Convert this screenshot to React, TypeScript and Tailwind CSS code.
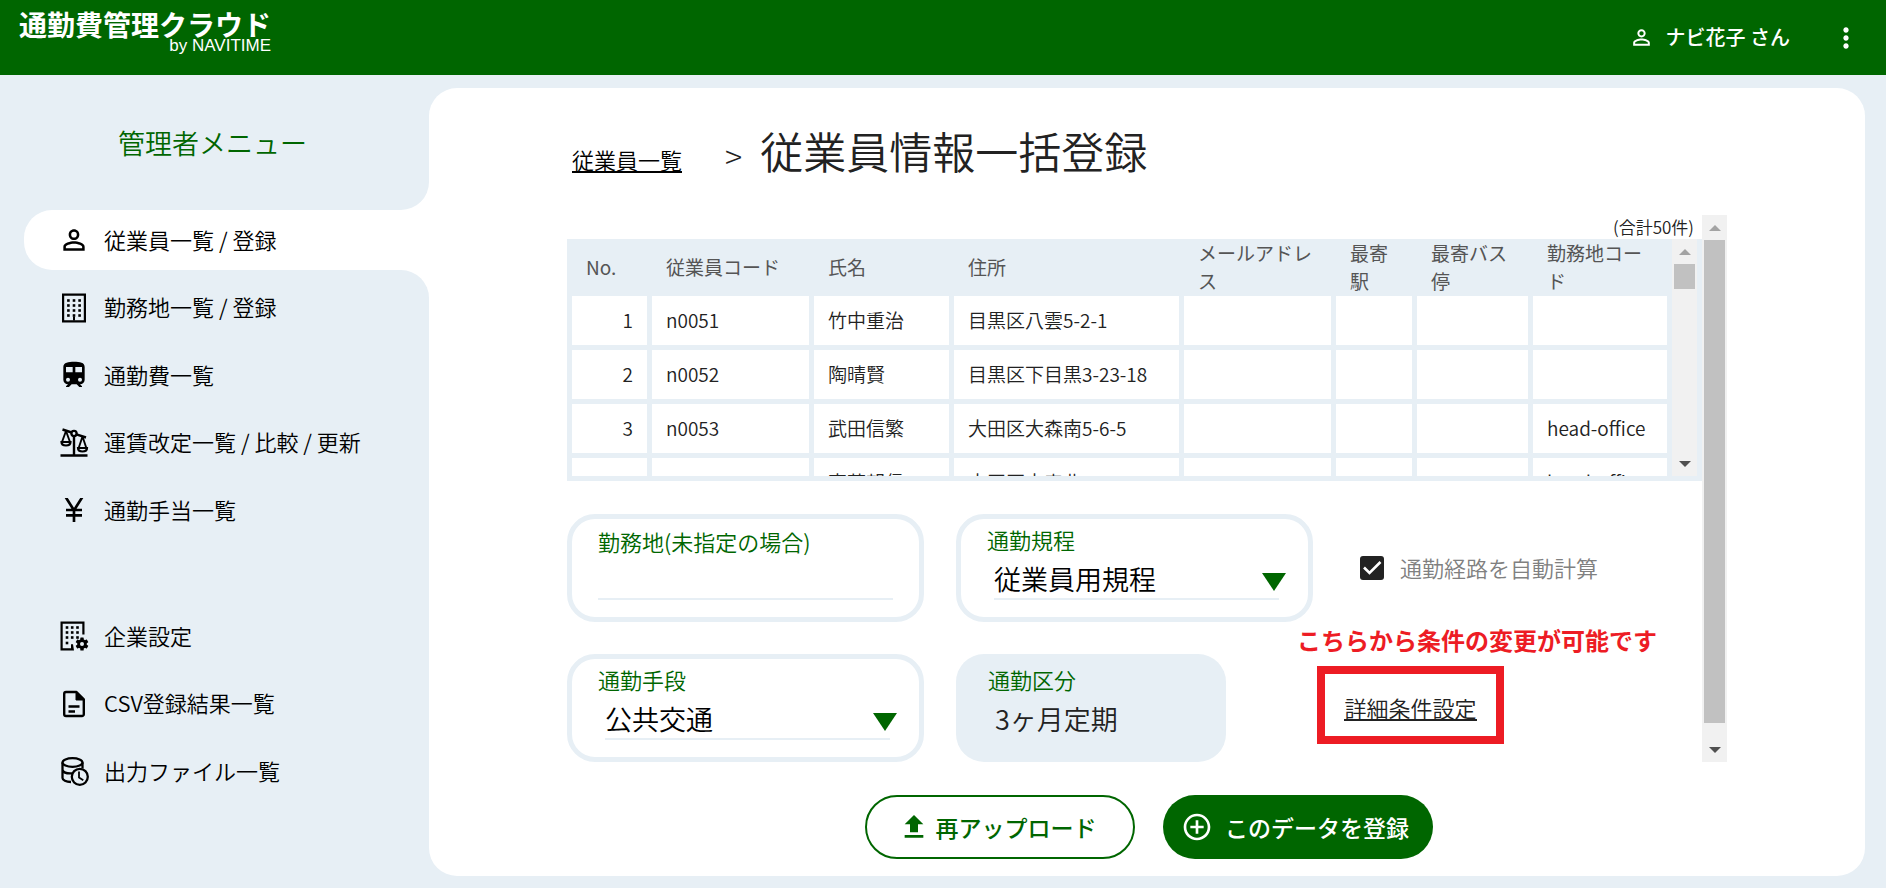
import type { ReactNode } from "react";
import {
  MdAddCircleOutline,
  MdCurrencyYen,
  MdFileUpload,
  MdMoreVert,
  MdPersonOutline,
} from "react-icons/md";

function BuildingIcon() {
  return (
    <svg viewBox="0 0 32 32" className="size-8" fill="currentColor" aria-hidden="true">
      <path fillRule="evenodd" d="M4 1.500h24v29H4zM6.200 3.700v24.600h19.600V3.700z" />
      {[8.500, 13.500, 18.500, 23.500].map((y) =>
        [10.400, 16, 21.600].map((x) => (
          <rect key={`${x}-${y}`} x={x - 1.300} y={y - 1.300} width="2.600" height="2.600" />
        )),
      )}
      <path d="M15 24.500h2v4h-2z" />
    </svg>
  );
}

function TrainIcon() {
  return (
    <svg viewBox="0 0 24 24" className="size-8" fill="currentColor" aria-hidden="true">
      <path d="M12 2C8 2 4 2.500 4 6v9.500A3.500 3.500 0 0 0 7.500 19L6 20.500V21h2.230l2-2H14l2 2h2v-.500L16.500 19a3.500 3.500 0 0 0 3.500-3.500V6c0-3.500-3.580-4-8-4zM7.500 17A1.500 1.500 0 0 1 6 15.500 1.500 1.500 0 0 1 7.500 14 1.500 1.500 0 0 1 9 15.500 1.500 1.500 0 0 1 7.500 17zM11 10H6V6h5v4zm2 0V6h5v4h-5zm3.500 7a1.500 1.500 0 0 1-1.500-1.500 1.500 1.500 0 0 1 1.500-1.500 1.500 1.500 0 0 1 1.500 1.500 1.500 1.500 0 0 1-1.500 1.500z" />
    </svg>
  );
}

function ScaleIcon() {
  return (
    <svg viewBox="0 0 32 32" className="size-8" fill="none" stroke="currentColor" strokeWidth="2.400" aria-hidden="true">
      <path d="M2.500 28.500h27M16 9v19" />
      <circle cx="16" cy="6.500" r="2.600" />
      <path d="M4.500 2.500l9.200 3M18.400 7.300L28 10.500" />
      <path d="M8 4L4 15M8 4l4 11M24.500 9.500l-4 12M24.500 9.500l4 12" strokeWidth="1.900" />
      <path d="M3.500 15h9c0 2.500-2 3.500-4.500 3.500S3.500 17.500 3.500 15zM20 21h9c0 2.500-2 3.500-4.500 3.500S20 23.500 20 21z" strokeWidth="2.200" />
    </svg>
  );
}

function BuildingGearIcon() {
  return (
    <svg viewBox="0 0 32 32" className="size-8" fill="currentColor" aria-hidden="true">
      <path d="M2.500 1.500h24v13h-2.200V3.700H4.700v24.600h8.300v-4h2l1 6.200H2.500z" />
      {[7.500, 12.500, 17.500, 23].map((y) =>
        [9, 14.200, 19.500].map((x) =>
          y === 23 && x > 10 ? null : (
            <rect key={`${x}-${y}`} x={x - 1.300} y={y - 1.300} width="2.600" height="2.600" />
          ),
        ),
      )}
      <g transform="translate(24 24)">
        {[0, 60, 120].map((a) => (
          <rect key={a} x="-1.700" y="-6.400" width="3.400" height="12.800" rx=".5" transform={`rotate(${a})`} />
        ))}
        <circle r="4.800" />
        <circle r="2" fill="#e7eff5" />
      </g>
    </svg>
  );
}

function FileIcon() {
  return (
    <svg viewBox="0 0 32 32" className="size-8" fill="none" stroke="currentColor" strokeWidth="2.400" strokeLinejoin="round" aria-hidden="true">
      <path d="M18.500 4H8a1.800 1.800 0 0 0-1.800 1.800v20.400A1.800 1.800 0 0 0 8 28h16a1.800 1.800 0 0 0 1.800-1.800V11.300z" />
      <path d="M18 4v8h8z" fill="currentColor" strokeWidth="1" />
      <path d="M10.500 18.500h11M10.500 23.500h6.500" />
    </svg>
  );
}

function DatabaseClockIcon() {
  return (
    <svg viewBox="0 0 32 32" className="size-8" fill="none" stroke="currentColor" strokeWidth="2.300" aria-hidden="true">
      <ellipse cx="14.500" cy="7.500" rx="10" ry="4.300" />
      <path d="M4.500 7.500v15.500c0 2 3.500 3.800 8.500 4M24.500 7.500v6M4.500 15c1 2.500 5 3.700 9.500 3.400" />
      <circle cx="21.800" cy="21.800" r="8" fill="#e7eff5" />
      <path d="M21 16.500v6l4.300 2.800" strokeWidth="1.800" />
    </svg>
  );
}

type MenuEntry = { label: string; icon: ReactNode; active?: boolean };

const mainMenu: MenuEntry[] = [
  { label: "従業員一覧 / 登録", icon: <MdPersonOutline className="size-8" />, active: true },
  { label: "勤務地一覧 / 登録", icon: <BuildingIcon /> },
  { label: "通勤費一覧", icon: <TrainIcon /> },
  { label: "運賃改定一覧 / 比較 / 更新", icon: <ScaleIcon /> },
  { label: "通勤手当一覧", icon: <MdCurrencyYen className="size-8" /> },
];

const subMenu: MenuEntry[] = [
  { label: "企業設定", icon: <BuildingGearIcon /> },
  { label: "CSV登録結果一覧", icon: <FileIcon /> },
  { label: "出力ファイル一覧", icon: <DatabaseClockIcon /> },
];

function MenuItem({ label, icon, active }: MenuEntry) {
  return (
    <li className="relative">
      <a
        href="#"
        aria-current={active ? "page" : undefined}
        className={
          active
            ? "flex h-15 items-center gap-3.5 rounded-l-[28px] bg-white pl-[34px]"
            : "flex h-15 items-center gap-3.5 pl-[34px]"
        }
      >
        {icon}
        <span className="pb-0.5">{label}</span>
      </a>
      {active && (
        <>
          <span className="absolute right-0 bottom-full size-7 bg-white">
            <span className="block size-7 rounded-br-[28px] bg-[#e7eff5]" />
          </span>
          <span className="absolute top-full right-0 size-7 bg-white">
            <span className="block size-7 rounded-tr-[28px] bg-[#e7eff5]" />
          </span>
        </>
      )}
    </li>
  );
}

type Row = { no: number; code: string; name: string; address: string; office: string };

const rows: Row[] = [
  { no: 1, code: "n0051", name: "竹中重治", address: "目黒区八雲5-2-1", office: "" },
  { no: 2, code: "n0052", name: "陶晴賢", address: "目黒区下目黒3-23-18", office: "" },
  { no: 3, code: "n0053", name: "武田信繁", address: "大田区大森南5-6-5", office: "head-office" },
  { no: 4, code: "n0054", name: "斎藤朝信", address: "大田区大森北", office: "head-office" },
];

const headers = ["No.", "従業員コード", "氏名", "住所", "メールアドレス", "最寄駅", "最寄バス停", "勤務地コード"];

function Arrow({ down }: { down?: boolean }) {
  return (
    <span className="flex h-[25px] items-center justify-center">
      <svg viewBox="0 0 12 6" className="h-1.5 w-3" aria-hidden="true">
        {down ? <path d="M0 0h12L6 6z" fill="#505050" /> : <path d="M0 6h12L6 0z" fill="#a3a3a3" />}
      </svg>
    </span>
  );
}

function ScrollTrack({ thumb }: { thumb: string }) {
  return (
    <div className="flex w-[25px] shrink-0 flex-col bg-[#f1f1f1]" aria-hidden="true">
      <Arrow />
      <div className="min-h-0 flex-1 px-0.5">
        <div className={thumb} />
      </div>
      <Arrow down />
    </div>
  );
}

function EmployeeTable() {
  return (
    <div className="flex h-[242px] bg-[#e7eff5] pr-[5px] pb-[5px]">
      <div className="min-w-0 flex-1 overflow-hidden">
        <table className="w-full table-fixed border-separate border-spacing-x-[5px] border-spacing-y-0 text-[19px] leading-7">
          <colgroup>
            <col className="w-[75px]" />
            <col className="w-[157px]" />
            <col className="w-[135px]" />
            <col className="w-[225px]" />
            <col className="w-[147px]" />
            <col className="w-[76px]" />
            <col className="w-[111px]" />
            <col />
          </colgroup>
          <thead>
            <tr className="h-[57px]">
              {headers.map((h) => (
                <th key={h} className="px-3.5 pt-0 pb-px text-left font-normal text-[#555]">
                  {h}
                </th>
              ))}
            </tr>
          </thead>
          <tbody className="text-[#222]">
            {rows.map((r) => (
              <tr key={r.no} className="h-[54px] [&>td]:border-b-[5px] [&>td]:border-[#e7eff5] [&>td]:bg-white [&>td]:px-3.5 [&>td]:pt-0 [&>td]:pb-0.5">
                <td className="text-right">{r.no}</td>
                <td>{r.code}</td>
                <td>{r.name}</td>
                <td>{r.address}</td>
                <td />
                <td />
                <td />
                <td>{r.office}</td>
              </tr>
            ))}
          </tbody>
        </table>
      </div>
      <ScrollTrack thumb="h-[25px] bg-[#c1c1c1]" />
    </div>
  );
}

function SelectCard({ id, label, value }: { id: string; label: string; value: string }) {
  return (
    <div className="h-[108px] w-[357px] rounded-[28px] border-[5px] border-[#e7eff5] px-[26px] pt-1">
      <label htmlFor={id} className="block text-[22px] leading-8 text-[#006600]">
        {label}
      </label>
      <div className="relative mt-0.5 ml-[7px]">
        <select
          id={id}
          defaultValue={value}
          className="block h-[43px] w-[285px] appearance-none border-b-2 border-[#e7eff5] bg-transparent pt-0.5 text-[27px] leading-9 text-black outline-none"
        >
          <option>{value}</option>
        </select>
        <svg viewBox="0 0 24 18" className="pointer-events-none absolute top-4 -right-1 h-[18px] w-6 text-[#006600]" aria-hidden="true">
          <path d="M0 0h24L12 18z" fill="currentColor" />
        </svg>
      </div>
    </div>
  );
}

export default function App() {
  return (
    <div className="flex min-h-screen flex-col bg-[#e7eff5] font-['Noto_Sans_CJK_JP',sans-serif] text-[#222]">
      <header className="flex h-[75px] items-center justify-between bg-[#006600] pr-6 pl-[19px] text-white">
        <div className="flex h-full flex-col items-end pt-2.5">
          <span className="text-[28px] leading-7 font-bold">通勤費管理クラウド</span>
          <span className="font-['Liberation_Sans',sans-serif] text-[17px] leading-4">by NAVITIME</span>
        </div>
        <div className="flex items-center">
          <MdPersonOutline className="size-[25px]" />
          <span className="ml-3 pb-px text-[20px] font-medium">ナビ花子 さん</span>
          <button type="button" aria-label="メニュー" className="ml-10">
            <MdMoreVert className="size-8" />
          </button>
        </div>
      </header>

      <div className="flex flex-1 pr-[21px] pb-3">
        <aside className="w-[429px] shrink-0 pt-[47px] pl-6 text-[22px] font-[350] text-black">
          <h2 className="pr-7 text-center text-[27px] leading-[42px] text-[#006600]">管理者メニュー</h2>
          <nav className="mt-[46px]">
            <ul className="flex h-[330px] flex-col justify-between">
              {mainMenu.map((m) => (
                <MenuItem key={m.label} {...m} />
              ))}
            </ul>
            <ul className="mt-[66px] flex h-[195px] flex-col justify-between">
              {subMenu.map((m) => (
                <MenuItem key={m.label} {...m} />
              ))}
            </ul>
          </nav>
        </aside>

        <main className="mt-[13px] min-w-0 flex-1 rounded-[28px] bg-white px-6 pb-[17px]">
          <div className="mx-auto max-w-[1160px]">
            <div className="flex h-[127px] items-baseline pt-8 pl-[5px] font-[350]">
              <a href="#" className="border-b-2 border-black text-[22px] leading-6 text-black">
                従業員一覧
              </a>
              <span className="ml-[43px] text-[32px] leading-8 font-light">&gt;</span>
              <h1 className="ml-[18px] text-[43px] leading-[60px]">従業員情報一括登録</h1>
            </div>

            <section className="flex">
              <div className="min-w-0 flex-1 font-[350]">
                <p className="pr-2 text-right text-[17px] leading-6">(合計50件)</p>
                <EmployeeTable />

                <form className="mt-[33px] flex flex-col gap-8 text-[22px]">
                  <div className="flex">
                    <div className="h-[108px] w-[357px] rounded-[28px] border-[5px] border-[#e7eff5] px-[26px] pt-1.5">
                      <label htmlFor="office" className="block leading-8 text-[#006600]">
                        勤務地(未指定の場合)
                      </label>
                      <input id="office" type="text" className="block h-[43px] w-full border-b-2 border-[#e7eff5] text-[27px] outline-none" />
                    </div>
                    <div className="ml-8">
                      <SelectCard id="rule" label="通勤規程" value="従業員用規程" />
                    </div>
                    <label className="ml-[47px] flex items-center gap-4 text-[#808080]">
                      <span className="relative size-6">
                        <input type="checkbox" defaultChecked className="block size-6 appearance-none rounded-[3px] bg-[#222]" />
                        <svg viewBox="0 0 24 24" className="pointer-events-none absolute inset-0 size-6" fill="none" stroke="#fff" strokeWidth="2.600" aria-hidden="true">
                          <path d="M4 11.500l5.500 5.500L20.500 6" />
                        </svg>
                      </span>
                      <span className="pb-0.5">通勤経路を自動計算</span>
                    </label>
                  </div>

                  <div className="flex">
                    <SelectCard id="means" label="通勤手段" value="公共交通" />
                    <div className="ml-8 h-[108px] w-[270px] rounded-[28px] bg-[#e7eff5] px-8 pt-[9px]">
                      <p className="leading-8 text-[#006600]">通勤区分</p>
                      <p className="pt-1 pl-[7px] text-[27px] leading-10">3ヶ月定期</p>
                    </div>
                    <div className="relative mt-3 ml-[91px] flex h-[78px] w-[187px] items-center justify-center border-8 border-[#ed1c24] pt-1.5">
                      <p className="absolute bottom-full left-[-28px] pb-[18px] text-[24px] leading-8 font-bold whitespace-nowrap text-[#ed1c24]">
                        こちらから条件の変更が可能です
                      </p>
                      <a href="#" className="border-b-2 border-[#222] leading-6">
                        詳細条件設定
                      </a>
                    </div>
                  </div>
                </form>
              </div>
              <ScrollTrack thumb="h-[483px] bg-[#c1c1c1]" />
            </section>

            <div className="mt-[33px] flex justify-center gap-7 pl-1 text-[23px] font-medium">
              <button type="button" className="flex h-16 w-[270px] items-center justify-center gap-1.5 rounded-full border-2 border-[#006600] pr-1.5 text-[#006600]">
                <MdFileUpload className="size-8" />
                再アップロード
              </button>
              <button type="button" className="flex h-16 w-[270px] items-center justify-center gap-3 rounded-full bg-[#006600] pr-1.5 text-white">
                <MdAddCircleOutline className="size-8" />
                このデータを登録
              </button>
            </div>
          </div>
        </main>
      </div>
    </div>
  );
}
